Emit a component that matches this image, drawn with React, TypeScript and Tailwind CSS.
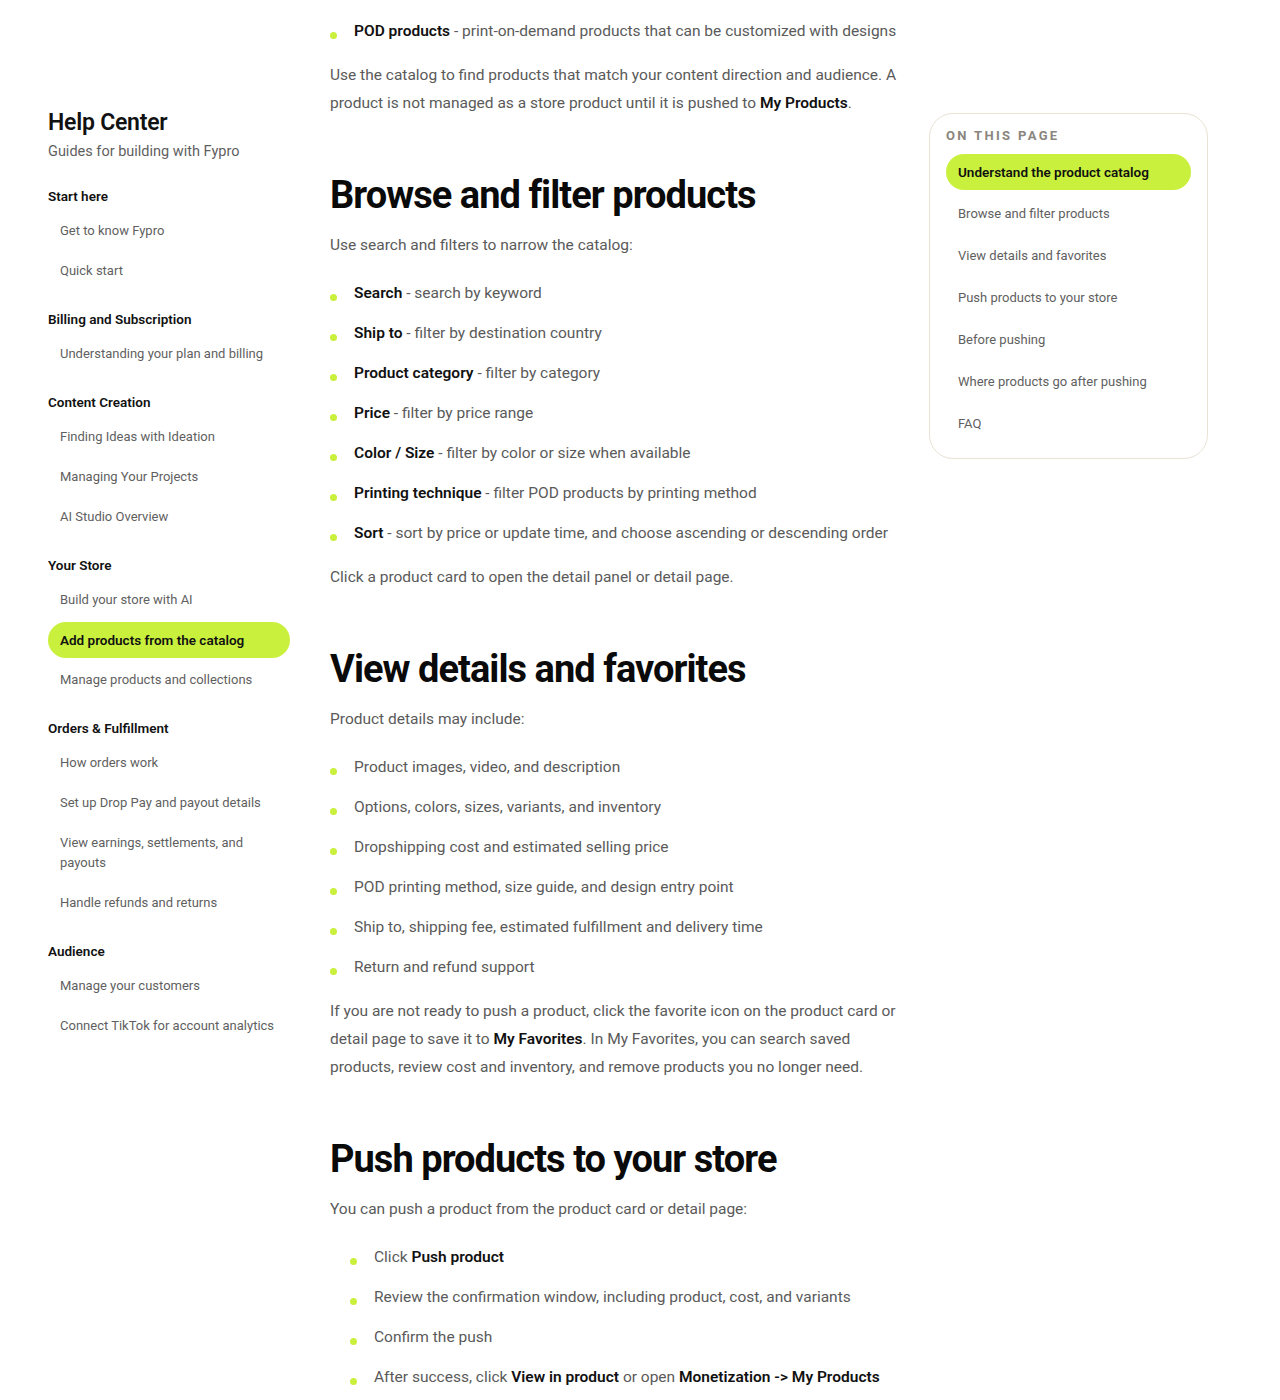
import React from 'react';

type NavSection = { title: string; items: string[] };

const navSections: NavSection[] = [
  { title: 'Start here', items: ['Get to know Fypro', 'Quick start'] },
  { title: 'Billing and Subscription', items: ['Understanding your plan and billing'] },
  { title: 'Content Creation', items: ['Finding Ideas with Ideation', 'Managing Your Projects', 'AI Studio Overview'] },
  { title: 'Your Store', items: ['Build your store with AI', 'Add products from the catalog', 'Manage products and collections'] },
  {
    title: 'Orders & Fulfillment',
    items: ['How orders work', 'Set up Drop Pay and payout details', 'View earnings, settlements, and payouts', 'Handle refunds and returns'],
  },
  { title: 'Audience', items: ['Manage your customers', 'Connect TikTok for account analytics'] },
];

const tocItems = [
  'Understand the product catalog',
  'Browse and filter products',
  'View details and favorites',
  'Push products to your store',
  'Before pushing',
  'Where products go after pushing',
  'FAQ',
];

const ACTIVE_NAV = 'Add products from the catalog';

const Sidebar = () => (
  <nav className="w-[242px] shrink-0 pt-[109px]">
    <h1 className="text-[23px] leading-[28px] font-semibold text-[#111] tracking-[-0.01em]">Help Center</h1>
    <p className="mt-1 text-[14.5px] leading-[22px] text-[#5f5f5f]">Guides for building with Fypro</p>

    <div className="mt-6 flex flex-col gap-[21px]">
      {navSections.map((section) => (
        <div key={section.title}>
          <div className="text-[13.5px] leading-[19px] font-semibold text-[#111]">{section.title}</div>
          <ul className="mt-[7px] flex flex-col gap-1">
            {section.items.map((item) => (
              <li key={item}>
                <a
                  className={
                    item === ACTIVE_NAV
                      ? 'block rounded-full bg-[#c9f03d] px-3 py-2 text-[13.5px] leading-[20px] font-semibold text-[#111]'
                      : 'block rounded-full px-3 py-2 text-[13px] leading-[20px] text-[#5f5f5f]'
                  }
                >
                  {item}
                </a>
              </li>
            ))}
          </ul>
        </div>
      ))}
    </div>
  </nav>
);

const B = ({ children }: { children: React.ReactNode }) => (
  <strong className="font-semibold text-[#111]">{children}</strong>
);

const BulletList = ({ items, nested = false }: { items: React.ReactNode[]; nested?: boolean }) => (
  <ul className={nested ? 'mt-5 flex flex-col gap-3 pl-5' : 'mt-5 mb-4 flex flex-col gap-3'}>
    {items.map((item, i) => (
      <li key={i} className="flex items-start text-[15.5px] leading-[28px] text-[#5a5a5a]">
        <span className="mt-[15px] mr-[17px] h-[7px] w-[7px] shrink-0 rounded-full bg-[#c9f03d]" />
        <span>{item}</span>
      </li>
    ))}
  </ul>
);

const H2 = ({ children }: { children: React.ReactNode }) => (
  <h2 className="mt-14 mb-3.5 text-[38px] leading-[44px] font-bold tracking-[-0.025em] text-[#0a0a0a]">{children}</h2>
);

const P = ({ children }: { children: React.ReactNode }) => (
  <p className="text-[15.5px] leading-[28px] text-[#5a5a5a]">{children}</p>
);

const Article = () => (
  <main className="ml-10 w-[570px] shrink-0 pt-[17px] pb-[10px]">
    <ul className="mb-4 flex flex-col gap-3">
      <li className="flex items-start text-[15.5px] leading-[28px] text-[#5a5a5a]">
        <span className="mt-[15px] mr-[17px] h-[7px] w-[7px] shrink-0 rounded-full bg-[#c9f03d]" />
        <span>
          <B>POD products</B> - print-on-demand products that can be customized with designs
        </span>
      </li>
    </ul>
    <P>
      Use the catalog to find products that match your content direction and audience. A product is not managed as a
      store product until it is pushed to <B>My Products</B>.
    </P>

    <H2>Browse and filter products</H2>
    <P>Use search and filters to narrow the catalog:</P>
    <BulletList
      items={[
        <><B>Search</B> - search by keyword</>,
        <><B>Ship to</B> - filter by destination country</>,
        <><B>Product category</B> - filter by category</>,
        <><B>Price</B> - filter by price range</>,
        <><B>Color / Size</B> - filter by color or size when available</>,
        <><B>Printing technique</B> - filter POD products by printing method</>,
        <><B>Sort</B> - sort by price or update time, and choose ascending or descending order</>,
      ]}
    />
    <P>Click a product card to open the detail panel or detail page.</P>

    <H2>View details and favorites</H2>
    <P>Product details may include:</P>
    <BulletList
      items={[
        'Product images, video, and description',
        'Options, colors, sizes, variants, and inventory',
        'Dropshipping cost and estimated selling price',
        'POD printing method, size guide, and design entry point',
        'Ship to, shipping fee, estimated fulfillment and delivery time',
        'Return and refund support',
      ]}
    />
    <P>
      If you are not ready to push a product, click the favorite icon on the product card or detail page to save it to{' '}
      <B>My Favorites</B>. In My Favorites, you can search saved products, review cost and inventory, and remove products
      you no longer need.
    </P>

    <H2>Push products to your store</H2>
    <P>You can push a product from the product card or detail page:</P>
    <BulletList
      nested
      items={[
        <>Click <B>Push product</B></>,
        'Review the confirmation window, including product, cost, and variants',
        'Confirm the push',
        <>After success, click <B>View in product</B> or open <B>Monetization -&gt; My Products</B></>,
      ]}
    />
  </main>
);

const OnThisPage = () => (
  <aside className="ml-[29px] w-[279px] shrink-0 pt-[113px]">
    <div className="rounded-[24px] border border-[#e8e3d5] bg-white px-4 pt-3 pb-4">
      <div className="text-[13px] leading-[20px] font-bold uppercase tracking-[0.18em] text-[#8a857d]">
        On this page
      </div>
      <ul className="mt-[8px] flex flex-col gap-1.5">
        {tocItems.map((item, i) => (
          <li key={item}>
            <a
              className={
                i === 0
                  ? 'block rounded-full bg-[#c9f03d] px-3 py-2 text-[13.5px] leading-[20px] font-semibold text-[#111]'
                  : 'block rounded-full px-3 py-2 text-[13px] leading-[20px] text-[#5f5f5f]'
              }
            >
              {item}
            </a>
          </li>
        ))}
      </ul>
    </div>
  </aside>
);

export default function App() {
  return (
    <div className="bg-white font-['Roboto',sans-serif] antialiased">
      <div className="flex pl-12">
        <Sidebar />
        <Article />
        <OnThisPage />
      </div>
    </div>
  );
}
